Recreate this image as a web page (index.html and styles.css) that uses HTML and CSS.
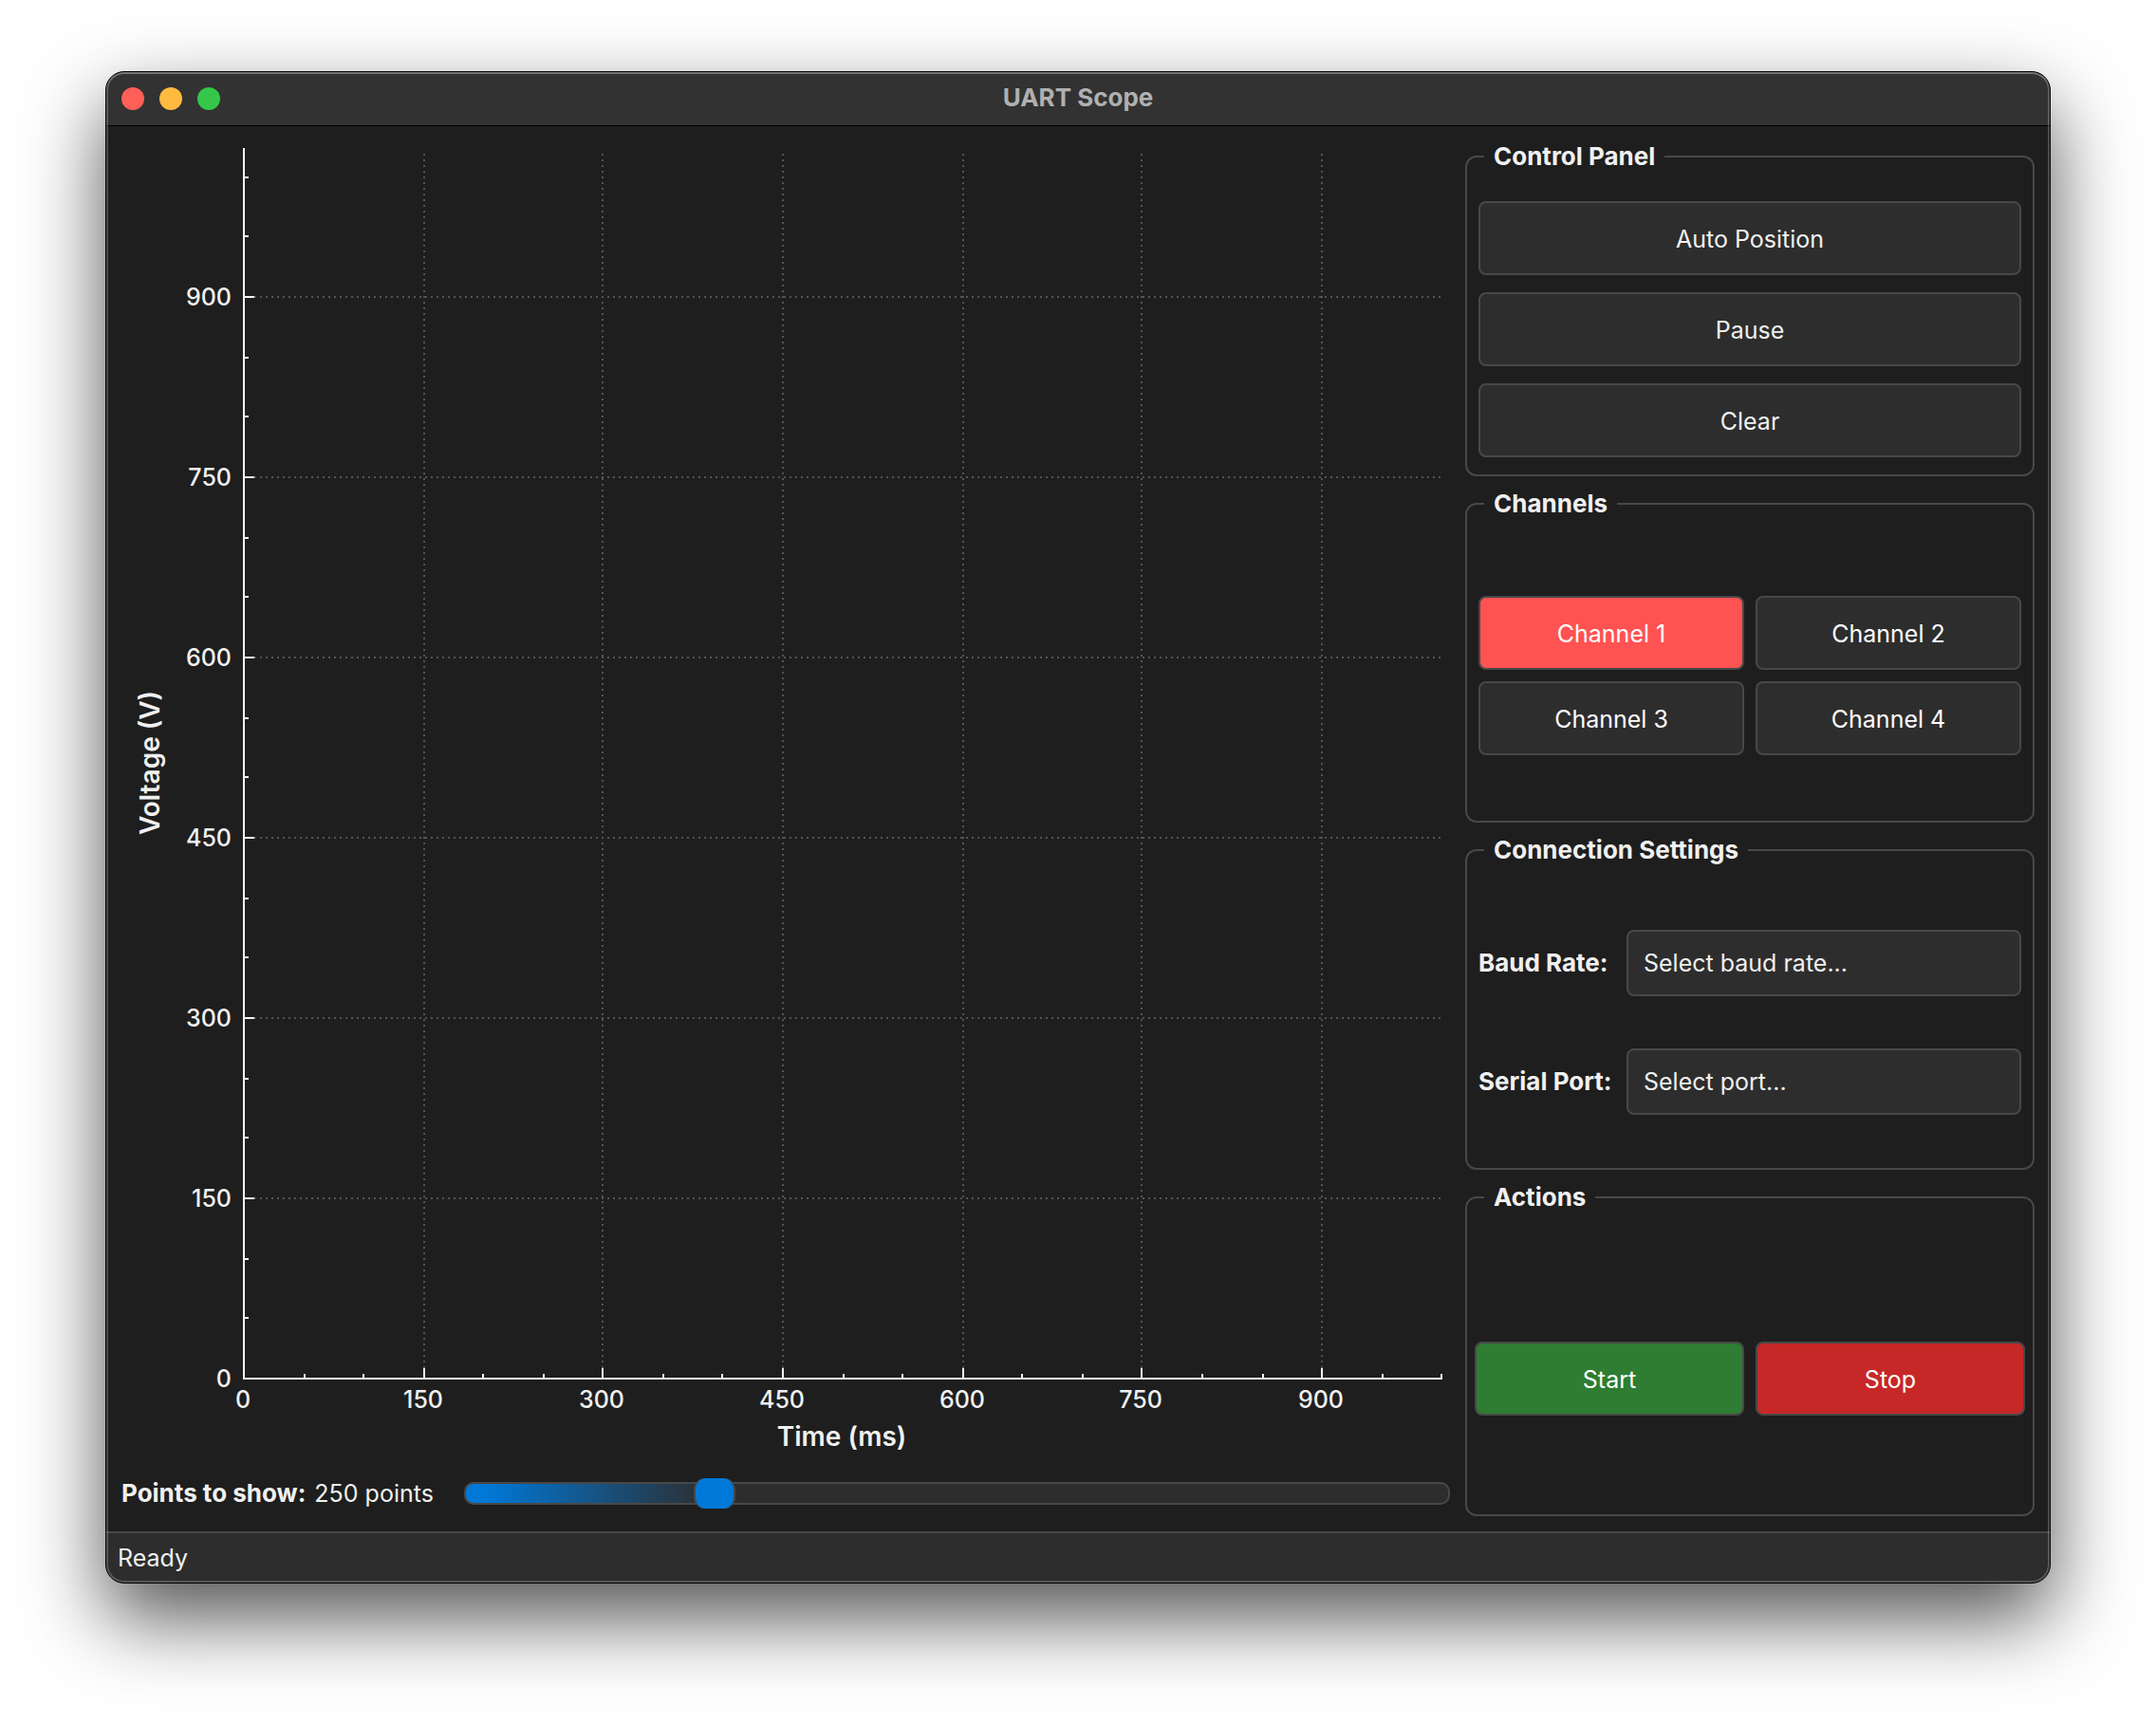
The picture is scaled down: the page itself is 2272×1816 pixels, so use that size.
FILE: index.html
```html
<!DOCTYPE html>
<html lang="en">
<head>
<meta charset="utf-8">
<title>UART Scope</title>
<link rel="stylesheet" href="styles.css">
</head>
<body>
<div class="window">
  <header class="titlebar">
    <div class="lights">
      <span class="light light-close"></span>
      <span class="light light-min"></span>
      <span class="light light-max"></span>
    </div>
    <h1 class="title">UART Scope</h1>
  </header>

  <main class="main">
    <section class="scope">
      <svg class="chart" viewBox="0 0 1400 1409" role="img" aria-label="Voltage over time">
        <g class="grid">
          <path d="M319 29V1309M507 29V1309M697 29V1309M887 29V1309M1075 29V1309M1265 29V1309"/>
          <path d="M140 180H1392M140 370H1392M140 560H1392M140 750H1392M140 940H1392M140 1130H1392"/>
        </g>
        <g class="axis">
          <path d="M129 23V1320M128 1320H1392"/>
          <path d="M128 180H140M128 370H140M128 560H140M128 750H140M128 940H140M128 1130H140"/>
          <path d="M128 54H134M128 116H134M128 244H134M128 306H134M128 434H134M128 496H134M128 624H134M128 686H134M128 814H134M128 876H134M128 1004H134M128 1066H134M128 1194H134M128 1256H134"/>
          <path d="M319 1309V1320M507 1309V1320M697 1309V1320M887 1309V1320M1075 1309V1320M1265 1309V1320"/>
          <path d="M193 1315V1320M255 1315V1320M381 1315V1320M445 1315V1320M571 1315V1320M633 1315V1320M761 1315V1320M823 1315V1320M949 1315V1320M1013 1315V1320M1139 1315V1320M1203 1315V1320M1329 1315V1320M1391 1315V1320"/>
        </g>
        <g class="tick tick-y">
          <text x="116" y="189">900</text>
          <text x="116" y="379">750</text>
          <text x="116" y="569">600</text>
          <text x="116" y="759">450</text>
          <text x="116" y="949">300</text>
          <text x="116" y="1139">150</text>
          <text x="116" y="1329">0</text>
        </g>
        <g class="tick tick-x">
          <text x="128" y="1351">0</text>
          <text x="318" y="1351">150</text>
          <text x="506" y="1351">300</text>
          <text x="696" y="1351">450</text>
          <text x="886" y="1351">600</text>
          <text x="1074" y="1351">750</text>
          <text x="1264" y="1351">900</text>
        </g>
        <text class="axis-title" x="759" y="1391">Time (ms)</text>
        <text class="axis-title" transform="translate(40 671) rotate(-90)">Voltage (V)</text>
      </svg>
      <div class="points">
        <label class="points-label" for="points">Points to show:</label>
        <output class="points-value" for="points">250 points</output>
        <input class="slider" id="points" type="range" min="10" max="1000" value="250">
      </div>
    </section>

    <aside class="sidebar">
      <fieldset class="group group-even">
        <legend>Control Panel</legend>
        <button class="btn" type="button">Auto Position</button>
        <button class="btn" type="button">Pause</button>
        <button class="btn" type="button">Clear</button>
      </fieldset>

      <fieldset class="group">
        <legend>Channels</legend>
        <div class="pair">
          <button class="btn btn-channel btn-active" type="button" aria-pressed="true">Channel 1</button>
          <button class="btn btn-channel" type="button" aria-pressed="false">Channel 2</button>
          <button class="btn btn-channel" type="button" aria-pressed="false">Channel 3</button>
          <button class="btn btn-channel" type="button" aria-pressed="false">Channel 4</button>
        </div>
      </fieldset>

      <fieldset class="group group-even">
        <legend>Connection Settings</legend>
        <div class="field">
          <label for="baud">Baud Rate:</label>
          <select class="select" id="baud"><option>Select baud rate...</option></select>
        </div>
        <div class="field">
          <label for="port">Serial Port:</label>
          <select class="select" id="port"><option>Select port...</option></select>
        </div>
      </fieldset>

      <fieldset class="group group-actions">
        <legend>Actions</legend>
        <div class="pair">
          <button class="btn btn-start" type="button">Start</button>
          <button class="btn btn-stop" type="button">Stop</button>
        </div>
      </fieldset>
    </aside>
  </main>

  <footer class="statusbar">Ready</footer>
</div>
</body>
</html>
```

FILE: styles.css
```css
:root {
  --bg: #1e1e1e;
  --surface: #2d2d2d;
  --line: #484848;
  --text: #f0f0f0;
  --accent: #0078d7;
}

* {
  box-sizing: border-box;
}

body {
  margin: 0;
  padding: 75px 111px 147px;
  background: #fff;
  color: var(--text);
  font: 400 25px/32px Inter, "Liberation Sans", sans-serif;
}

.window {
  position: relative;
  border: 1px solid #000;
  border-radius: 20px;
  background: var(--bg);
  overflow: hidden;
  box-shadow: 0 36px 84px rgba(0, 0, 0, 0.68);
}

/* light rim drawn over the window's edge */
.window::after {
  content: "";
  position: absolute;
  inset: 0;
  border-radius: 19px;
  box-shadow: inset 0 0 0 2px rgba(255, 255, 255, 0.2), inset 0 2px 0 rgba(255, 255, 255, 0.16);
  pointer-events: none;
}

.titlebar {
  display: grid;
  grid-template-columns: 1fr auto 1fr;
  align-items: center;
  height: 57px;
  padding: 0 16px;
  border-bottom: 1px solid #000;
  background: #323232;
}

.lights {
  display: flex;
  gap: 16px;
}

.light {
  width: 24px;
  height: 24px;
  border-radius: 50%;
}

.light-close { background: #ff5f57; }
.light-min { background: #febb40; }
.light-max { background: #34c749; }

.title {
  margin: 0;
  padding-bottom: 2px;
  color: #b0b0b0;
  font-size: 26px;
  font-weight: 700;
  line-height: 32px;
}

.main {
  display: grid;
  grid-template-columns: 7fr 3fr;
  gap: 16px;
  padding: 0 16px 16px;
}

.scope {
  display: flex;
  flex-direction: column;
  gap: 16px;
  min-width: 0;
  padding-bottom: 8px;
}

.chart {
  display: block;
  width: 100%;
  height: auto;
}

.grid path,
.axis path {
  fill: none;
  stroke-width: 2;
  shape-rendering: crispEdges;
}

.grid path {
  stroke: #545454;
  stroke-dasharray: 2 4;
}

.axis path {
  stroke: #f4f4f4;
}

.tick {
  fill: var(--text);
  font-size: 25px;
  font-weight: 500;
}

.tick-y { text-anchor: end; }
.tick-x { text-anchor: middle; }

.axis-title {
  fill: var(--text);
  font-size: 28px;
  font-weight: 600;
  text-anchor: middle;
}

.points {
  display: flex;
  align-items: center;
  height: 32px;
}

.points-label {
  margin-right: 9px;
  font-size: 26px;
  font-weight: 700;
}

.points-value {
  margin-right: 32px;
}

.slider {
  flex: 1;
  min-width: 0;
  height: 32px;
  margin: 0;
  background: none;
  appearance: none;
}

.slider::-webkit-slider-runnable-track {
  height: 24px;
  border: 2px solid var(--line);
  border-radius: 10px;
  background: linear-gradient(to right, var(--accent) 2%, var(--surface) 25%);
}

.slider::-webkit-slider-thumb {
  width: 44px;
  height: 32px;
  margin-top: -6px;
  border: solid var(--line);
  border-width: 0 2px;
  border-radius: 12px;
  background: var(--accent);
  appearance: none;
}

.sidebar {
  display: grid;
  grid-template-rows: repeat(4, 1fr);
  gap: 13px;
  min-width: 0;
  padding-top: 16px;
}

.group {
  display: flex;
  flex-direction: column;
  justify-content: center;
  min-width: 0;
  margin: 0;
  padding: 13px 12px 0;
  border: 2px solid var(--line);
  border-radius: 12px;
}

.group-even {
  justify-content: space-evenly;
}

.group-actions {
  padding: 33px 8px 0;
}

.group legend {
  margin-left: 6px;
  padding: 0 10px;
  font-size: 26px;
  font-weight: 700;
}

.group-actions legend {
  margin-left: 10px;
}

.pair {
  display: grid;
  grid-template-columns: 1fr 1fr;
  gap: 12px;
}

.btn {
  height: 78px;
  padding: 2px 16px 0;
  border: 2px solid var(--line);
  border-radius: 8px;
  background: var(--surface);
  color: var(--text);
  font: inherit;
}

.btn-channel,
.btn-start,
.btn-stop {
  color: #fff;
}

.btn-active { background: #ff5252; }
.btn-start { background: #2e7d32; }
.btn-stop { background: #c62828; }

.field {
  display: grid;
  grid-template-columns: 144px 1fr;
  gap: 12px;
  align-items: center;
}

.field label {
  font-size: 26px;
  font-weight: 700;
  white-space: nowrap;
}

.select {
  height: 70px;
  min-width: 0;
  padding: 0 16px;
  border: 2px solid var(--line);
  border-radius: 8px;
  background: var(--surface);
  color: var(--text);
  font: inherit;
  appearance: none;
}

.statusbar {
  height: 54px;
  padding: 10px 12px;
  border-top: 2px solid var(--line);
  background: var(--surface);
}
```
